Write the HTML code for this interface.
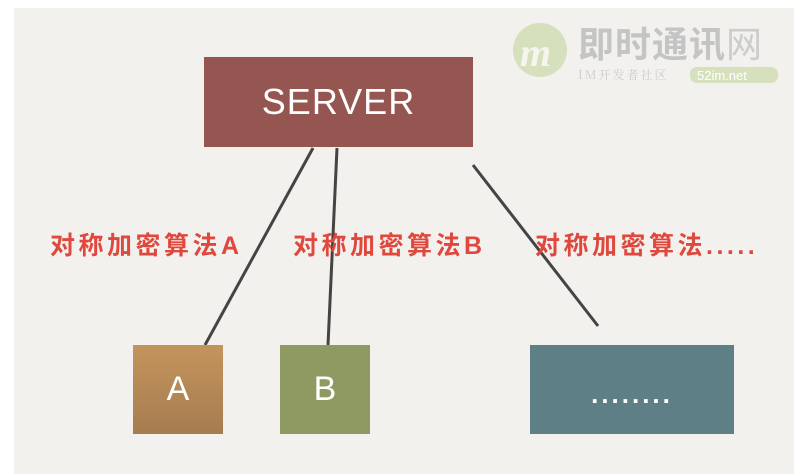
<!DOCTYPE html>
<html><head><meta charset="utf-8"><style>
body{margin:0;width:802px;height:476px;background:#fff;position:relative;overflow:hidden;font-family:"Liberation Sans","Noto Sans CJK SC",sans-serif}
.bg{position:absolute;left:14px;top:8px;width:780px;height:466px;background:#f2f1ee}
.box{position:absolute;color:#fff;display:flex;align-items:center;justify-content:center}
.lbl{position:absolute;top:231px;color:#e0483e;font-size:25px;font-weight:bold;letter-spacing:3.5px;white-space:nowrap;line-height:30px}
</style></head><body>
<div class="bg"></div>
<svg style="position:absolute;left:0;top:0" width="802" height="476">
<line x1="313" y1="148" x2="205" y2="345" stroke="#444" stroke-width="3"/>
<line x1="337" y1="148" x2="328" y2="345" stroke="#444" stroke-width="3"/>
<line x1="473" y1="165" x2="598" y2="326" stroke="#444" stroke-width="3"/>
<circle cx="540" cy="50" r="27" fill="#d6e0bc"/>
<text x="520" y="66" font-family="Liberation Serif" font-style="italic" font-weight="bold" font-size="40" fill="#f5f5f0">m</text>
<rect x="690" y="67" width="88" height="16" rx="7" fill="#d6e0bc"/>
<text x="697" y="80" font-family="Liberation Sans" font-size="13" fill="#fff">52im.net</text>
</svg>
<div style="position:absolute;left:578px;top:20px;font-size:36px;font-weight:bold;color:#c4c4c4;letter-spacing:1px;line-height:44px;font-family:'Noto Sans CJK SC',sans-serif">即时通讯<span style="font-weight:normal;color:#cccccc">网</span></div>
<div style="position:absolute;left:578px;top:66px;font-size:12px;color:#cccccc;letter-spacing:2px;font-family:'Noto Serif CJK SC',serif">IM开发者社区</div>
<div class="box" style="left:204px;top:57px;width:269px;height:90px;background:#955550;font-size:36px;letter-spacing:1px">SERVER</div>
<div class="box" style="left:133px;top:345px;width:90px;height:89px;background:linear-gradient(#c3955d,#a77c4f);font-size:34px">A</div>
<div class="box" style="left:280px;top:345px;width:90px;height:89px;background:#8e9a62;font-size:34px">B</div>
<div class="box" style="left:530px;top:345px;width:204px;height:89px;background:#5e7f86;font-size:26px;font-weight:bold;letter-spacing:3px;padding-top:10px;box-sizing:border-box">........</div>
<div class="lbl" style="left:50px">对称加密算法A</div>
<div class="lbl" style="left:293px">对称加密算法B</div>
<div class="lbl" style="left:535px">对称加密算法.....</div>
</body></html>
